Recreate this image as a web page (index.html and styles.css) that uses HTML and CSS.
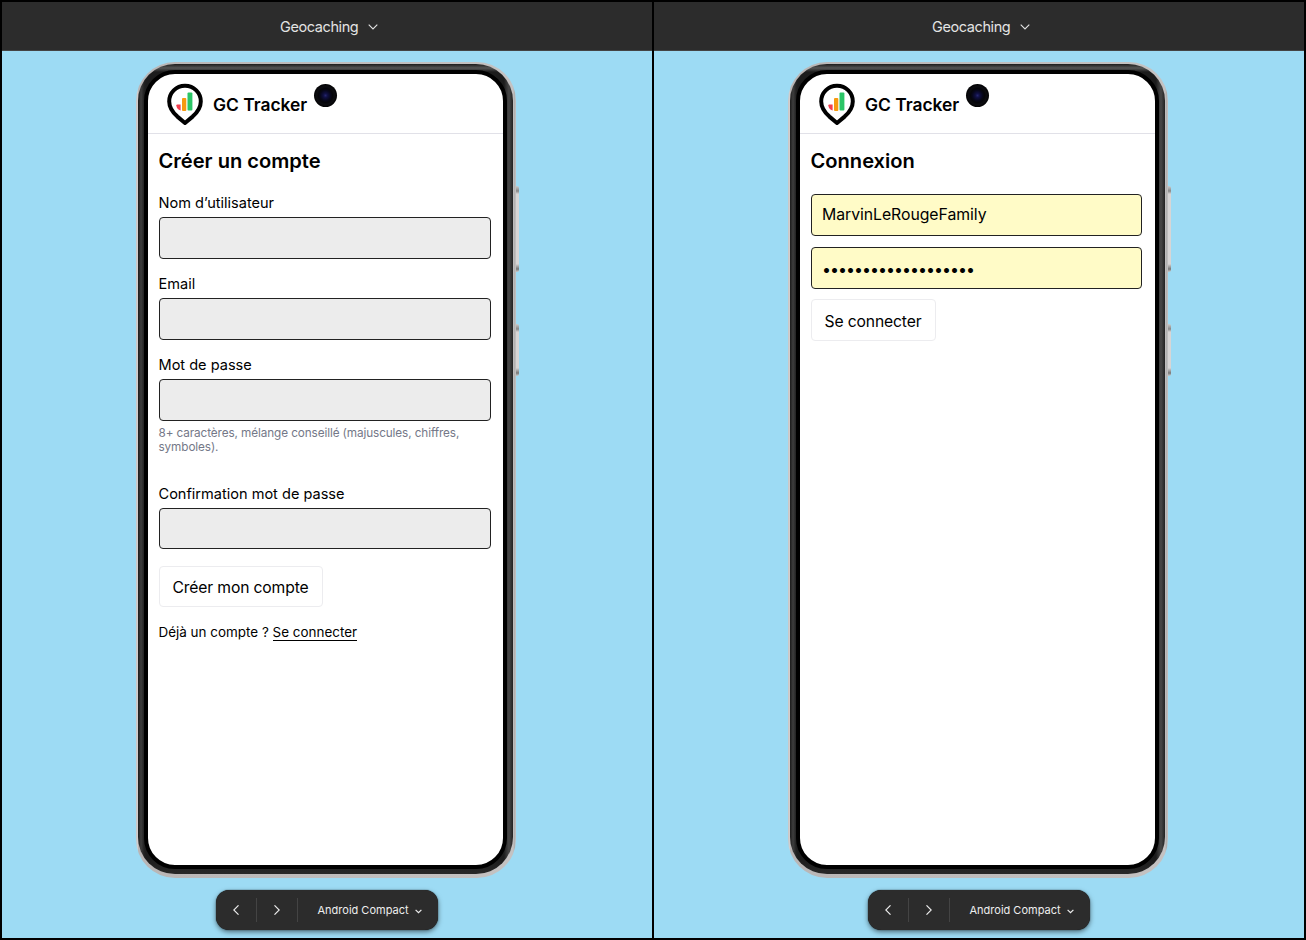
FILE: index.html
```html
<!DOCTYPE html>
<html lang="fr">
<head>
<meta charset="utf-8">
<title>GC Tracker</title>
<link rel="stylesheet" href="styles.css">
</head>
<body>
<svg class="defs" width="0" height="0" aria-hidden="true">
  <symbol id="logo" viewBox="0 0 38 43">
    <path d="M19 2.800C10 2.800 3.200 9.700 3.200 18.400c0 6.600 3.600 11 8.200 15.200L19 40l7.600-6.400c4.600-4.200 8.200-8.600 8.200-15.200C34.800 9.700 28 2.800 19 2.800z" fill="#fff" stroke="#000" stroke-width="4" stroke-linejoin="round"/>
    <path d="M10.300 22.500q0-1 1-1h3.300v6q-3.800-1-4.300-5z" fill="#f43f4f"/>
    <rect x="16" y="15" width="4.300" height="13" rx="1" fill="#f79a10"/>
    <rect x="21.500" y="9.600" width="4.900" height="18" rx="1" fill="#2bc566"/>
  </symbol>
  <symbol id="down" viewBox="0 0 10 6"><path d="M.7.700 5 5 9.300.700" fill="none" stroke="currentColor" stroke-width="1.100"/></symbol>
  <symbol id="down-small" viewBox="0 0 7 5"><path d="M.6.800 3.500 3.700 6.400.800" fill="none" stroke="currentColor" stroke-width="1.200"/></symbol>
  <symbol id="prev" viewBox="0 0 6 10"><path d="M5.500.300 .8 5l4.700 4.700" fill="none" stroke="currentColor" stroke-width="1.100"/></symbol>
  <symbol id="next" viewBox="0 0 6 10"><path d="M.5.300 5.200 5 .5 9.700" fill="none" stroke="currentColor" stroke-width="1.100"/></symbol>
</svg>
<main class="board">
  <section class="panel">
    <header class="topbar"><span>Geocaching</span><svg class="chev"><use href="#down"/></svg></header>
    <div class="stage">
      <div class="phone">
        <i class="key key-volume"></i><i class="key key-power"></i>
        <div class="bezel"><div class="screen">
          <i class="camera"></i>
          <div class="brand"><svg class="logo"><use href="#logo"/></svg><strong>GC Tracker</strong></div>
          <form class="form">
            <h1>Créer un compte</h1>
            <label>Nom d’utilisateur</label><div class="field"></div>
            <label>Email</label><div class="field"></div>
            <label>Mot de passe</label><div class="field"></div>
            <p class="hint">8+ caractères, mélange conseillé (majuscules, chiffres, symboles).</p>
            <label>Confirmation mot de passe</label><div class="field"></div>
            <button type="button" class="create">Créer mon compte</button>
            <p class="already">Déjà un compte ? <a>Se connecter</a></p>
          </form>
        </div></div>
      </div>
      <nav class="device"><span class="step"><svg class="arrow"><use href="#prev"/></svg></span><span class="step"><svg class="arrow"><use href="#next"/></svg></span><span class="model">Android Compact<svg class="mini"><use href="#down-small"/></svg></span></nav>
    </div>
  </section>
  <section class="panel">
    <header class="topbar"><span>Geocaching</span><svg class="chev"><use href="#down"/></svg></header>
    <div class="stage">
      <div class="phone">
        <i class="key key-volume"></i><i class="key key-power"></i>
        <div class="bezel"><div class="screen">
          <i class="camera"></i>
          <div class="brand"><svg class="logo"><use href="#logo"/></svg><strong>GC Tracker</strong></div>
          <form class="form login">
            <h1>Connexion</h1>
            <div class="field filled">MarvinLeRougeFamily</div>
            <div class="field filled secret">•••••••••••••••••••</div>
            <button type="button" class="connect">Se connecter</button>
          </form>
        </div></div>
      </div>
      <nav class="device"><span class="step"><svg class="arrow"><use href="#prev"/></svg></span><span class="step"><svg class="arrow"><use href="#next"/></svg></span><span class="model">Android Compact<svg class="mini"><use href="#down-small"/></svg></span></nav>
    </div>
  </section>
</main>
</body>
</html>
```
FILE: styles.css
```css
* { box-sizing: border-box; }
body { margin: 0; font-family: Inter, sans-serif; color: #000; }
.defs { position: absolute; }
.board { width: 1306px; height: 940px; padding: 2px; background: #000; display: grid; grid-template-columns: 650px 650px; gap: 2px; overflow: hidden; }
.panel { display: flex; flex-direction: column; background: #9ddbf4; overflow: hidden; }
.topbar { height: 49px; flex: none; background: #2c2c2c; border-bottom: 1px solid #444; color: #e3e3e3; display: flex; align-items: center; padding: 1px 0 0 278px; font-size: 14.500px; gap: 10px; }
.topbar span { letter-spacing: -.4px; }
.chev { width: 10px; height: 6px; }
.stage { flex: 1; padding: 11px 0 0 134px; }
.phone { position: relative; width: 380px; height: 816px; padding: 2px 3px 4px 2px; border-radius: 39px; background: linear-gradient(90deg, #b8b6b6, #dddada 1px, #b9b6b6 2.500px, #c4c2c2 377px, #aaa 379px, #d4d2d2); }
.bezel { height: 100%; border-radius: 37px; background: linear-gradient(90deg, #1c1c1c, #3e3e3e 3px, #222 6px, transparent 8px, transparent 366px, #303030 368px, #484848 371px, #222), linear-gradient(#1c1c1c, #555 4px, #1c1c1c 8px, #1c1c1c 98%, #282828); padding: 6px 6px 5px 6px; }
.screen { position: relative; height: 100%; border: 4px solid #000; border-radius: 31px; background: #fff; overflow: hidden; }
.key { position: absolute; right: -3px; width: 3px; border-radius: 0 2px 2px 0; background: linear-gradient(#ccc, #888 5px, #d7d5d5 8px, #d7d5d5 calc(100% - 8px), #777 calc(100% - 3px), #ccc); }
.key-volume { top: 124px; height: 86px; }
.key-power { top: 262px; height: 52px; }
.camera { position: absolute; left: 166px; top: 10px; width: 23px; height: 23px; border-radius: 50%; background: radial-gradient(circle, #25256c 0, #101044 2px, #07071b 5px, #050509 7px, #0c0c10 9px, #000 12px); }
.brand { height: 60px; border-bottom: 1px solid #e1e1e8; display: flex; align-items: center; padding-left: 17.500px; gap: 9.500px; }
.logo { width: 38px; height: 43px; margin-top: 1px; }
.brand strong { font-size: 17.400px; font-weight: 600; line-height: 22px; padding-top: 2px; }
.form { padding: 15px 11px 0 10.500px; display: flex; flex-direction: column; align-items: flex-start; }
h1 { margin: 0 0 20px; font-size: 20.100px; line-height: 24px; font-weight: 600; }
label { font-size: 14.550px; line-height: 18px; height: 18px; padding-top: 1px; margin-bottom: 6px; }
.field { width: 332px; height: 42px; margin: 0 0 15px .5px; border: 1px solid #222; border-radius: 4px; background: #ececec; flex: none; }
.field + .hint { margin: -10px 0 30px; font-size: 11.750px; letter-spacing: -.1px; line-height: 14px; color: #747888; }
.hint + label + .field { height: 41px; margin-bottom: 17px; }
button { font: 15.700px/20px Inter, sans-serif; letter-spacing: -.15px; color: #000; background: #fff; border: 1px solid #ececef; border-radius: 4px; height: 41px; padding: 3px 0 0; }
.create { width: 164px; }
.connect { width: 125px; height: 42px; }
.already { margin: 17px 0 0; font-size: 13.450px; line-height: 17px; }
.already a { display: inline-block; border-bottom: 1px solid #000; line-height: 16px; }
.login h1 { margin-bottom: 21px; }
.login .field { width: 331px; margin: 0 0 11px; height: 42px; background: #fffbc7; font-size: 15.800px; letter-spacing: -.05px; padding: 0 10.500px 1px; display: flex; align-items: center; }
.login .field.secret { letter-spacing: -1px; padding-top: 2px; font-size: 16px; margin-bottom: 10px; }
.device { width: 222px; height: 40px; margin: 12px 0 0 80px; background: #2c2c2c; border-radius: 13px; box-shadow: 0 2px 5px rgba(0,0,0,.5), 0 0 1px #000; color: #eee; display: flex; align-items: center; }
.step { width: 41px; height: 24px; border-right: 1px solid #444; display: flex; align-items: center; justify-content: center; }
.arrow { width: 6px; height: 10px; }
.model { display: flex; align-items: center; margin-left: 19.500px; font-size: 11px; gap: 6px; }
.mini { width: 7px; height: 5px; margin-top: 3px; }
```
